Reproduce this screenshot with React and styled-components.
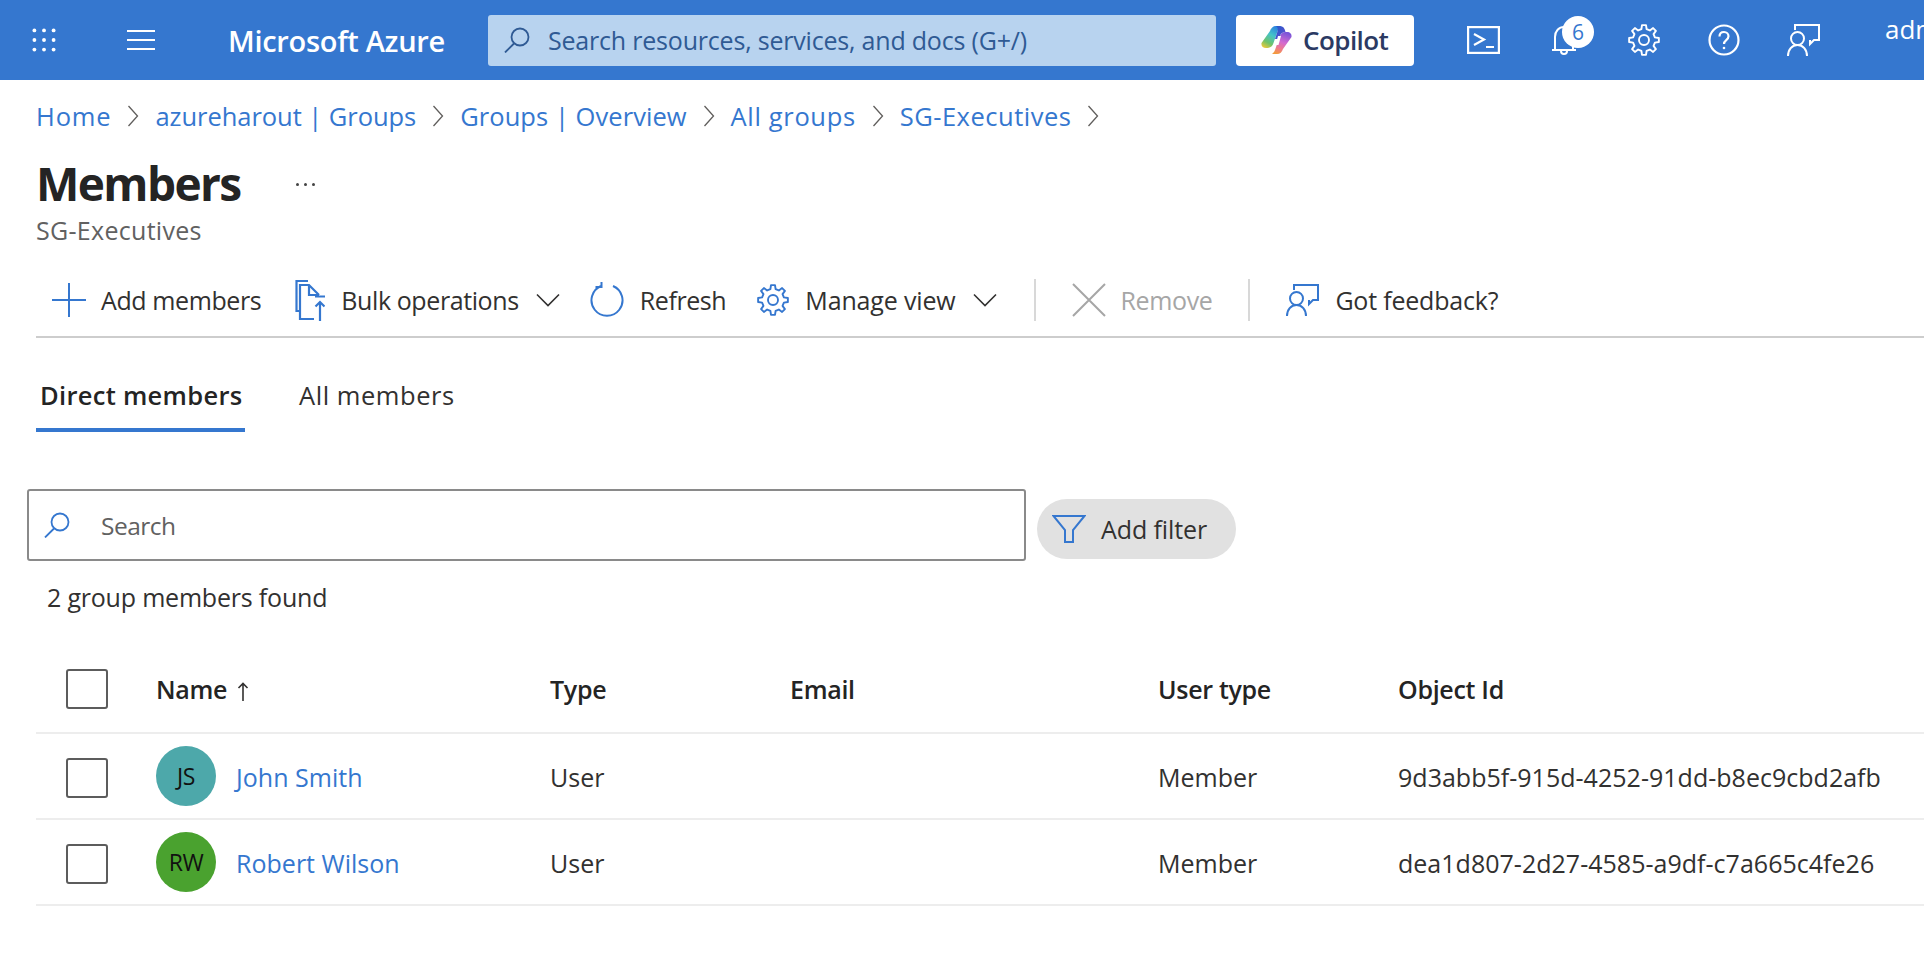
import React from "react";
import styled, { createGlobalStyle } from "styled-components";

const Global = createGlobalStyle`
  html, body { margin: 0; padding: 0; background: #fff; overflow: hidden; }
  body { font-family: "Open Sans", "Noto Sans", sans-serif; color: #323130; }
  * { box-sizing: border-box; }
`;

const Page = styled.div`
  width: 1924px;
  height: 968px;
  overflow: hidden;
`;

const TopBar = styled.header`
  height: 80px;
  background: #3577cf;
  display: flex;
  align-items: center;
  color: #fff;
  white-space: nowrap;
  overflow: hidden;
`;
const BarIcon = styled.span`
  display: flex;
  flex: none;
  width: ${(p) => p.$w}px;
  margin-left: ${(p) => p.$ml}px;
  justify-content: center;
  align-items: center;
  position: relative;
`;
const Brand = styled.div`
  font-size: 29px;
  font-weight: 600;
  letter-spacing: -0.3px;
  margin-left: 72px;
  width: 260px;
  flex: none;
`;
const GlobalSearch = styled.div`
  width: 728px;
  height: 51px;
  flex: none;
  background: #b8d3ef;
  border-radius: 3px;
  display: flex;
  align-items: center;
  padding-left: 16px;
  gap: 18px;
  color: #2f5a94;
  font-size: 25px;
  letter-spacing: -0.2px;
`;
const CopilotButton = styled.div`
  width: 178px;
  height: 51px;
  flex: none;
  margin-left: 20px;
  background: #fff;
  border-radius: 4px;
  display: flex;
  align-items: center;
  padding-left: 25px;
  gap: 11px;
  color: #2b3a63;
  font-size: 26px;
  font-weight: 600;
  letter-spacing: -0.55px;
`;
const Badge = styled.span`
  position: absolute;
  left: 15px;
  top: -9px;
  width: 32px;
  height: 32px;
  border-radius: 50%;
  background: #fff;
  color: #3577cf;
  font-size: 21px;
  font-weight: 500;
  display: flex;
  align-items: center;
  justify-content: center;
`;
const UserName = styled.div`
  flex: none;
  margin-left: 64px;
  font-size: 26px;
  font-weight: 500;
  margin-top: -22px;
`;

const Content = styled.main`
  padding-left: 36px;
`;
const Crumbs = styled.nav`
  height: 72px;
  display: flex;
  align-items: center;
  font-size: 25.5px;
  color: #3577cf;
`;
const Crumb = styled.a`
  color: #3577cf;
  flex: none;
  letter-spacing: ${(p) => p.$ls || 0}px;
`;
const CrumbSep = styled.span`
  display: flex;
  width: 44px;
  justify-content: center;
  flex: none;
`;
const TitleRow = styled.div`
  height: 62px;
  display: flex;
  align-items: center;
`;
const Title = styled.h1`
  margin: 0;
  font-size: 46px;
  font-weight: 700;
  color: #242424;
  letter-spacing: -1.6px;
  line-height: 62px;
`;
const More = styled.span`
  display: flex;
  gap: 5px;
  margin-left: 55px;
  margin-top: 2px;
`;
const Dot = styled.i`
  width: 3px;
  height: 3px;
  border-radius: 50%;
  background: #444;
`;
const Sub = styled.div`
  height: 32px;
  line-height: 32px;
  font-size: 25px;
  letter-spacing: 0.3px;
  color: #616161;
`;
const Toolbar = styled.div`
  margin-top: 20px;
  height: 72px;
  padding-bottom: 2px;
  border-bottom: 2px solid #cdcdcd;
  display: flex;
  align-items: center;
`;
const ToolBtn = styled.div`
  display: flex;
  align-items: center;
  flex: none;
  margin-left: ${(p) => p.$ml}px;
  gap: ${(p) => p.$gap || 15}px;
  font-size: 25px;
  letter-spacing: ${(p) => p.$ls ?? -0.4}px;
  color: ${(p) => (p.$off ? "#a6a6a6" : "#323130")};
  white-space: nowrap;
`;
const Divider = styled.span`
  width: 2px;
  height: 42px;
  flex: none;
  background: #d8d8d8;
  margin-left: ${(p) => p.$ml}px;
`;
const Tabs = styled.div`
  margin-top: 34px;
  height: 60px;
  display: flex;
`;
const Tab = styled.div`
  flex: none;
  width: ${(p) => p.$w}px;
  height: 60px;
  padding: 6px 0 0 ${(p) => p.$pl}px;
  margin-right: ${(p) => p.$mr || 0}px;
  font-size: 25.5px;
  line-height: 34px;
  letter-spacing: ${(p) => (p.$active ? 0.3 : 0.55)}px;
  font-weight: ${(p) => (p.$active ? 600 : 400)};
  color: ${(p) => (p.$active ? "#242424" : "#323130")};
  border-bottom: ${(p) => (p.$active ? "4px solid #3577cf" : "none")};
`;
const FilterRow = styled.div`
  margin: 57px 0 0 -9px;
  display: flex;
  align-items: flex-start;
`;
const SearchBox = styled.div`
  width: 999px;
  height: 72px;
  border: 2px solid #8a8a8a;
  border-radius: 3px;
  display: flex;
  align-items: center;
  padding-left: 15px;
  gap: 31px;
  font-size: 24.5px;
  letter-spacing: -0.5px;
  color: #616161;
`;
const FilterPill = styled.div`
  width: 199px;
  height: 60px;
  margin: 10px 0 0 11px;
  border-radius: 30px;
  background: #e1e1e1;
  display: flex;
  align-items: center;
  padding-left: 15px;
  gap: 15px;
  font-size: 25px;
  letter-spacing: -0.1px;
  color: #323130;
`;
const Count = styled.div`
  margin: 19px 0 0 11px;
  height: 34px;
  line-height: 34px;
  font-size: 25px;
  letter-spacing: -0.2px;
  color: #323130;
`;
const Table = styled.div`
  margin-top: 36px;
`;
const Row = styled.div`
  display: grid;
  grid-template-columns: 120px 394px 240px 368px 240px 1fr;
  align-items: center;
  height: ${(p) => p.$h}px;
  padding: ${(p) => (p.$head ? "0 0 5px" : "2px 0 0")};
  border-bottom: 2px solid #ededed;
  font-size: 25px;
  letter-spacing: ${(p) => (p.$head ? "-0.3px" : "0.02px")};
  font-weight: ${(p) => (p.$head ? 600 : 400)};
  color: ${(p) => (p.$head ? "#242424" : "#323130")};
  white-space: nowrap;
`;
const Check = styled.span`
  display: block;
  width: 42px;
  height: 40px;
  margin: ${(p) => (p.$head ? "0" : "2px")} 0 0 30px;
  border: 2px solid #5c5c5c;
  border-radius: 3px;
`;
const Person = styled.div`
  display: flex;
  align-items: center;
  gap: 20px;
`;
const Avatar = styled.span`
  width: 60px;
  height: 60px;
  flex: none;
  margin-top: -2px;
  border-radius: 50%;
  background: ${(p) => p.$bg};
  color: #111;
  font-size: 23px;
  letter-spacing: -0.5px;
  display: flex;
  align-items: center;
  justify-content: center;
`;
const PersonLink = styled.a`
  color: #3577cf;
`;
const SortArrow = styled.span`
  font-weight: 400;
  margin-left: 10px;
  display: inline-flex;
  vertical-align: middle;
`;

const Ico = ({ w = 32, h = 32, c = "currentColor", sw = 2, vb, children }) => (
  <svg width={w} height={h} viewBox={vb || `0 0 ${w} ${h}`} fill="none" stroke={c} strokeWidth={sw} style={{ display: "block", flex: "none" }}>
    {children}
  </svg>
);

const gearPath = (() => {
  const cx = 16, cy = 16, ro = 15, ri = 11.2, n = 8;
  const pt = (r, a) => `${(cx + r * Math.cos(a)).toFixed(2)} ${(cy + r * Math.sin(a)).toFixed(2)}`;
  let d = "";
  for (let i = 0; i < n; i++) {
    const a = (i * 2 * Math.PI) / n - Math.PI / 2;
    const s = (2 * Math.PI) / n;
    d += `${i ? "L" : "M"}${pt(ri, a - s * 0.3)} L${pt(ro, a - s * 0.17)} L${pt(ro, a + s * 0.17)} L${pt(ri, a + s * 0.3)} `;
  }
  return d + "Z";
})();

const Gear = ({ c, s = 32 }) => (
  <Ico w={s} h={s} vb="0 0 32 32" c={c} sw={1.9}>
    <circle cx="16" cy="16" r="5" />
    <path d={gearPath} strokeLinejoin="round" />
  </Ico>
);
const Feedback = ({ c }) => (
  <Ico w={34} h={34} c={c} sw={2}>
    <circle cx="10.500" cy="15.500" r="6.500" />
    <path d="M1 33c0-6.500 4-11 9.500-11S20 26.500 20 33" />
    <path d="M8 7V2h24v15h-5l-4 4v-4" />
  </Ico>
);
const Chevron = () => (
  <Ico w={24} h={14} c="#323130" sw={1.6}>
    <path d="M1 1.500l11 11 11-11" />
  </Ico>
);
const Sep = () => (
  <Ico w={12} h={22} c="#605e5c" sw={1.3}>
    <path d="M1.500 1l9 10-9 10" />
  </Ico>
);
const Lens = ({ c, s = 26 }) => (
  <Ico w={s} h={s} vb="0 0 26 26" c={c} sw={1.8}>
    <circle cx="16" cy="10" r="8.500" />
    <path d="M10 16.500L1 25.500" />
  </Ico>
);

const CopilotLogo = () => (
  <svg width="31" height="28" viewBox="0 0 31 28" style={{ display: "block", flex: "none" }}>
    <defs>
      <linearGradient id="cpA" x1="0.7" y1="0" x2="0.2" y2="1">
        <stop offset="0" stopColor="#2a7fe0" />
        <stop offset="0.4" stopColor="#45c3c8" />
        <stop offset="0.75" stopColor="#6fc36a" />
        <stop offset="1" stopColor="#e5c83c" />
      </linearGradient>
      <linearGradient id="cpB" x1="0.6" y1="0" x2="0.3" y2="1">
        <stop offset="0" stopColor="#7a55d8" />
        <stop offset="0.45" stopColor="#d36ad0" />
        <stop offset="0.75" stopColor="#ee7a8c" />
        <stop offset="1" stopColor="#f39a3c" />
      </linearGradient>
      <linearGradient id="cpC" x1="0" y1="0" x2="1" y2="1">
        <stop offset="0" stopColor="#1f5cc8" />
        <stop offset="1" stopColor="#6a4cd0" />
      </linearGradient>
    </defs>
    <path d="M9 5c1-3 3-5 6-5h5c-2 1.500-3 3.500-3.700 6L12.500 17c-1 3-3 5-6 5H5c-3 0-5-2-4.500-5z" fill="url(#cpA)" />
    <path d="M22 23c-1 3-3 5-6 5h-5c2-1.500 3-3.500 3.700-6L18.500 11c1-3 3-5 6-5H26c3 0 5 2 4.500 5z" fill="url(#cpB)" />
    <path d="M15 0h4c3 0 4.800 2 5.500 6-3 0-5 1.700-6 5l-.5 2h-4l2.300-7c.8-3 .7-5-1.300-6z" fill="url(#cpC)" />
    <path d="M17 10h3l-2.500 9h-3z" fill="#fff" />
  </svg>
);

const dots = [];
for (let y = 2; y <= 18; y += 8) for (let x = 2; x <= 18; x += 8) dots.push([x, y]);

export default function App() {
  return (
    <Page>
      <Global />
      <TopBar>
        <BarIcon $w={24} $ml={32}>
          <svg width="24" height="24" viewBox="0 0 20 20" fill="#fff">
            {dots.map(([x, y]) => <circle key={`${x}-${y}`} cx={x} cy={y} r="1.600" />)}
          </svg>
        </BarIcon>
        <BarIcon $w={30} $ml={70}>
          <Ico w={30} h={24} c="#fff" sw={2}>
            <path d="M1 3h28M1 12h28M1 21h28" />
          </Ico>
        </BarIcon>
        <Brand>Microsoft Azure</Brand>
        <GlobalSearch>
          <Lens c="#2f5a94" />
          <span>Search resources, services, and docs (G+/)</span>
        </GlobalSearch>
        <CopilotButton>
          <CopilotLogo />
          <span>Copilot</span>
        </CopilotButton>
        <BarIcon $w={33} $ml={53}>
          <Ico w={33} h={28} c="#fff" sw={2.2}>
            <rect x="1.100" y="1.100" width="30.800" height="25.800" />
            <path d="M7 8l10 5.500L7 19M19 21h8" />
          </Ico>
        </BarIcon>
        <BarIcon $w={34} $ml={47}>
          <Ico w={26} h={30} c="#fff" sw={2}>
            <path d="M1 25h24M4 25V12C4 6 8 2 13 2s9 4 9 10v13M10 26c0 4 6 4 6 0" />
          </Ico>
          <Badge>6</Badge>
        </BarIcon>
        <BarIcon $w={34} $ml={46}>
          <Gear c="#fff" />
        </BarIcon>
        <BarIcon $w={34} $ml={46}>
          <Ico w={32} h={32} c="#fff" sw={2.2}>
            <circle cx="16" cy="16" r="14.500" />
            <path d="M11.500 12.500c0-3 2-4.500 4.500-4.500s4.500 1.800 4.500 4.300c0 4-4.500 3.700-4.500 7.700" />
            <circle cx="16" cy="24" r="1.300" fill="#fff" stroke="none" />
          </Ico>
        </BarIcon>
        <BarIcon $w={34} $ml={46}>
          <Feedback c="#fff" />
        </BarIcon>
        <UserName>admin</UserName>
      </TopBar>
      <Content>
        <Crumbs>
          <Crumb $ls={0.85}>Home</Crumb>
          <CrumbSep><Sep /></CrumbSep>
          <Crumb $ls={-0.05}>azureharout | Groups</Crumb>
          <CrumbSep><Sep /></CrumbSep>
          <Crumb $ls={0.05}>Groups | Overview</Crumb>
          <CrumbSep><Sep /></CrumbSep>
          <Crumb $ls={0.65}>All groups</Crumb>
          <CrumbSep><Sep /></CrumbSep>
          <Crumb $ls={0.5}>SG-Executives</Crumb>
          <CrumbSep><Sep /></CrumbSep>
        </Crumbs>
        <TitleRow>
          <Title>Members</Title>
          <More><Dot /><Dot /><Dot /></More>
        </TitleRow>
        <Sub>SG-Executives</Sub>
        <Toolbar>
          <ToolBtn $ml={16} $gap={15}>
            <Ico w={34} h={34} c="#3577cf" sw={2}><path d="M17 0v34M0 17h34" /></Ico>
            Add members
          </ToolBtn>
          <ToolBtn $ml={34} $gap={16}>
            <Ico w={30} h={41} c="#3577cf" sw={2.2}>
              <path d="M13 1H1.500V31H5M19 39H5V5h9l10 10M14 5v10h10M20 16.500h10M25 41V22M20.500 26.500L25 22l4.500 4.500" />
            </Ico>
            Bulk operations
          </ToolBtn>
          <ToolBtn $ml={17}><Chevron /></ToolBtn>
          <ToolBtn $ml={30} $gap={16}>
            <Ico w={34} h={36} c="#3577cf" sw={2}>
              <path d="M23 4a15.500 15.500 0 1 1-12 0M11.500 0v5H5.500" />
            </Ico>
            Refresh
          </ToolBtn>
          <ToolBtn $ml={31} $gap={16} $ls={-0.15}>
            <Gear c="#3577cf" />
            Manage view
          </ToolBtn>
          <ToolBtn $ml={17}><Chevron /></ToolBtn>
          <Divider $ml={37} />
          <ToolBtn $ml={35} $off $gap={14}>
            <Ico w={36} h={36} c="#a6a6a6" sw={2}><path d="M2 2l32 32M34 2L2 34" /></Ico>
            Remove
          </ToolBtn>
          <Divider $ml={36} />
          <ToolBtn $ml={36} $gap={15} $ls={-0.2}>
            <Feedback c="#3577cf" />
            Got feedback?
          </ToolBtn>
        </Toolbar>
        <Tabs>
          <Tab $w={209} $pl={4} $mr={54} $active>Direct members</Tab>
          <Tab $w={200} $pl={0}>All members</Tab>
        </Tabs>
        <FilterRow>
          <SearchBox>
            <Lens c="#3577cf" />
            <span>Search</span>
          </SearchBox>
          <FilterPill>
            <Ico w={34} h={30} c="#3577cf" sw={2}><path d="M1.500 2h31L21 16v12h-8V16z" /></Ico>
            Add filter
          </FilterPill>
        </FilterRow>
        <Count>2 group members found</Count>
        <Table>
          <Row $head $h={84}>
            <Check $head />
            <span>
              Name
              <SortArrow>
                <Ico w={12} h={20} c="#323130" sw={1.600}><path d="M6 19V1.500M1.500 6L6 1.500 10.500 6" /></Ico>
              </SortArrow>
            </span>
            <span>Type</span>
            <span>Email</span>
            <span>User type</span>
            <span>Object Id</span>
          </Row>
          <Row $h={86}>
            <Check />
            <Person>
              <Avatar $bg="#4da8aa">JS</Avatar>
              <PersonLink>John Smith</PersonLink>
            </Person>
            <span>User</span>
            <span />
            <span>Member</span>
            <span>9d3abb5f-915d-4252-91dd-b8ec9cbd2afb</span>
          </Row>
          <Row $h={86}>
            <Check />
            <Person>
              <Avatar $bg="#4aa22f">RW</Avatar>
              <PersonLink>Robert Wilson</PersonLink>
            </Person>
            <span>User</span>
            <span />
            <span>Member</span>
            <span>dea1d807-2d27-4585-a9df-c7a665c4fe26</span>
          </Row>
        </Table>
      </Content>
    </Page>
  );
}
